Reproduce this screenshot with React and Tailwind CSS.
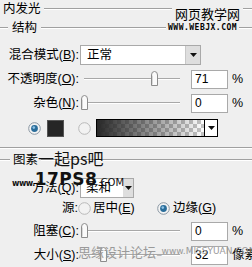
import React from "react";

const font = { fontFamily: '"Liberation Sans", "Noto Sans CJK SC", sans-serif' };

const Label = ({ text, k, w = "w-[80px]" }) => (
  <div className={`${w} shrink-0 text-right pr-[1px] text-[12.5px] text-black leading-none`}>
    {text}(<span className="underline">{k}</span>):
  </div>
);

const Line = ({ className = "" }) => (
  <div className={`h-[2px] border-t border-[#a0a0a0] border-b border-b-white ${className}`} />
);

const Thumb = () => (
  <svg width="9" height="15" viewBox="0 0 9 15">
    <path d="M1.5 14.5 V4 Q1.5 0.5 4.5 0.5 Q7.5 0.5 7.5 4 V14.5 Z" fill="#fafafa" stroke="#8c8c8c" />
    <path d="M2.5 13.5 V4.5" stroke="#d8d8d8" />
  </svg>
);

const Slider = ({ at }) => (
  <div className="relative w-[111px] h-[20px] shrink-0">
    <div className="absolute left-[4px] w-[96px] top-[9px] h-[2px] border-t border-[#a8a8a8] border-b border-b-white" />
    <div className="absolute top-[2px]" style={{ left: at }}>
      <Thumb />
    </div>
  </div>
);

const Input = ({ v }) => (
  <div className="w-[37px] h-[19px] shrink-0 bg-white border border-[#a9a9a9] text-[12px] leading-[17px] pl-[3px] text-black">
    {v}
  </div>
);

const Arrow = () => (
  <svg width="7" height="4" viewBox="0 0 7 4">
    <path d="M0 0 H7 L3.5 4 Z" fill="#111" />
  </svg>
);

const Radio = ({ on }) => (
  <svg width="13" height="13" viewBox="0 0 13 13" className="shrink-0">
    <circle cx="6.5" cy="6.5" r="5.8" fill={on ? "#f4f4f4" : "#f2f2f2"} stroke={on ? "#8a97a3" : "#b9b9b9"} />
    {on && <circle cx="6.5" cy="6.5" r="3.4" fill="#2a6d9a" />}
    {on && <circle cx="5.8" cy="5.6" r="1.3" fill="#8fc3e6" />}
  </svg>
);

const SliderRow = ({ label, k, at, v, unit = "%", mt }) => (
  <div className={`flex items-center h-[20px] ${mt}`}>
    <Label text={label} k={k} />
    <Slider at={at} />
    <Input v={v} />
    <div className="ml-[4px] text-[12.5px] leading-none whitespace-nowrap">{unit}</div>
  </div>
);

export default function App() {
  return (
    <div className="relative w-[252px] h-[267px] overflow-hidden bg-[#efefef] text-black" style={font}>
      {/* 内发光 */}
      <div className="flex items-center h-[18px] pt-[1px]">
        <div className="pl-[3px] pr-[3px] text-[12.5px] leading-none">内发光</div>
        <Line className="flex-1 -mt-[2px]" />
      </div>

      {/* 结构 */}
      <div className="flex items-center h-[18px] mt-[1px]">
        <Line className="w-[8px]" />
        <div className="px-[4px] text-[12.5px] leading-none">结构</div>
        <Line className="flex-1" />
      </div>

      <div className="flex items-center h-[20px] mt-[8px]">
        <Label text="混合模式" k="B" />
        <div className="flex w-[121px] h-[20px] bg-white border border-[#a9a9a9]">
          <div className="flex-1 pl-[6px] text-[12.5px] leading-[18px]">正常</div>
          <div className="w-[15px] h-full bg-[#dedede] border-l border-[#c8c8c8] flex items-center justify-center">
            <Arrow />
          </div>
        </div>
      </div>

      <SliderRow label="不透明度" k="O" at={70} v="71" mt="mt-[4px]" />
      <SliderRow label="杂色" k="N" at={0} v="0" mt="mt-[4px]" />

      <div className="flex items-center h-[18px] mt-[6px]">
        <div className="w-[28px]" />
        <Radio on />
        <div className="ml-[6px] w-[17px] h-[17px] bg-[#262626] border border-[#555]" />
        <div className="w-[14px]" />
        <Radio />
        <div className="ml-[5px] flex w-[122px] h-[18px] border border-black">
          <div
            className="flex-1 h-full"
            style={{
              backgroundImage:
                "linear-gradient(to right, rgba(40,40,40,1), rgba(40,40,40,0)), repeating-conic-gradient(#c4c4c4 0 25%, #ffffff 0 50%)",
              backgroundSize: "100% 100%, 8px 8px",
            }}
          />
          <div className="w-[13px] h-full bg-white border-l border-black flex items-center justify-center">
            <Arrow />
          </div>
        </div>
      </div>

      <Line className="mt-[10px]" />

      {/* 图素 */}
      <div className="flex items-center h-[16px] mt-[3px]">
        <Line className="w-[10px]" />
        <div className="px-[3px] text-[12.5px] leading-none">图素</div>
        <Line className="flex-1" />
      </div>

      <div className="flex items-center h-[20px] mt-[10px]">
        <Label text="方法" k="Q" />
        <div className="flex w-[54px] h-[20px] bg-white border border-[#a9a9a9]">
          <div className="flex-1 pl-[5px] text-[12.5px] leading-[18px]">柔和</div>
          <div className="w-[10px] h-full bg-[#dedede] flex items-center justify-center">
            <Arrow />
          </div>
        </div>
      </div>

      <div className="flex items-center h-[20px] text-[12.5px] leading-none">
        <div className="w-[78px] text-right">源:</div>
        <Radio />
        <div className="ml-[2px] w-[64px]">
          居中(<span className="underline">E</span>)
        </div>
        <Radio on />
        <div className="ml-[3px]">
          边缘(<span className="underline">G</span>)
        </div>
      </div>

      <SliderRow label="阻塞" k="C" at={0} v="0" mt="mt-[3px]" />
      <SliderRow label="大小" k="S" at={19} v="32" unit="像素" mt="mt-[4px]" />

      {/* watermarks */}
      <div className="absolute left-[172px] top-[7px] bg-[#efefef] px-[3px] text-[13px] leading-[15px] text-black">
        网页教学网
      </div>
      <div className="absolute left-[166px] top-[23px] bg-[#efefef] px-[2px] text-[8px] leading-[10px] font-bold tracking-[0.5px] text-black" style={{ fontFamily: '"DejaVu Sans Mono", monospace' }}>
        WWW.WEBJX.COM
      </div>
      <div className="absolute left-[38px] top-[149px] text-[16px] leading-[18px] text-[#111]" style={{ fontFamily: '"Noto Sans CJK SC", sans-serif' }}>
        一起ps吧
      </div>
      <div className="absolute left-[12px] top-[171px] flex items-end leading-none text-[#111] font-bold" style={{ fontFamily: '"DejaVu Sans", sans-serif' }}>
        <span className="text-[8px] tracking-[-0.5px]">www.</span>
        <span className="text-[17px] tracking-[0.5px]">17PS8</span>
        <span className="text-[10px] font-normal">.COM</span>
      </div>
      <div className="absolute left-[78px] top-[245px] flex items-end leading-none text-[#9a9a9a] whitespace-nowrap">
        <span className="text-[13px]" style={{ fontFamily: '"Noto Sans CJK SC", sans-serif' }}>思缘设计论坛</span>
        <span className="text-[9px] ml-[1px] mb-[2px]" style={{ fontFamily: '"DejaVu Sans", sans-serif' }}>_www.MISSYUAN.COM</span>
      </div>
    </div>
  );
}
